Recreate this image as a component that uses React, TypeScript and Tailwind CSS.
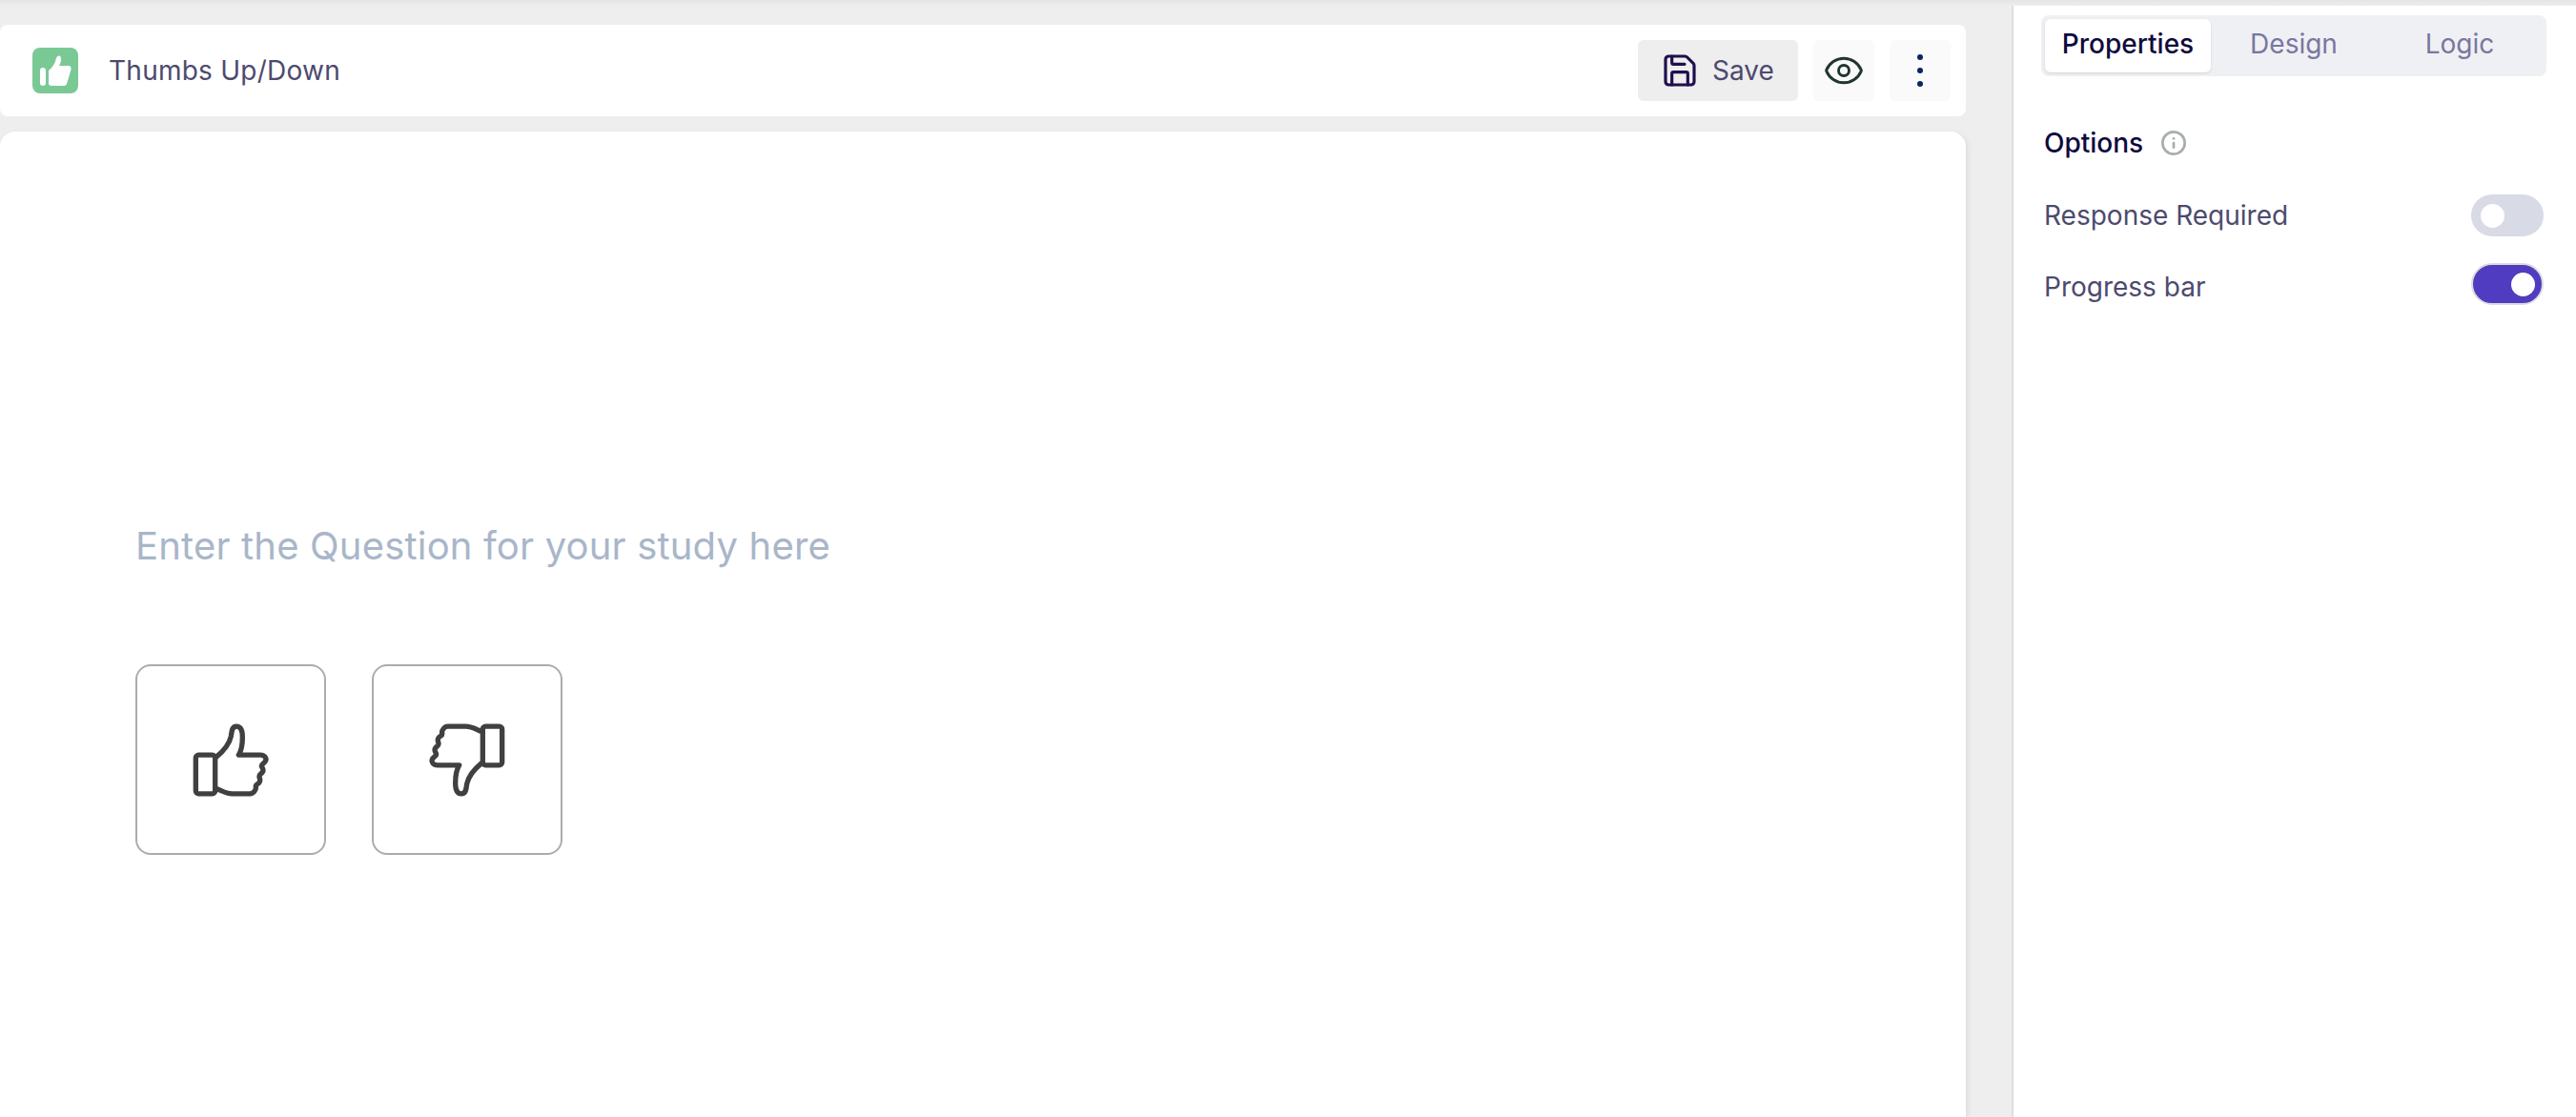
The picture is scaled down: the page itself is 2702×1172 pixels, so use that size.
import React from 'react';
import { Eye, Info, Save } from 'lucide-react';

const Thumb: React.FC<{ className?: string }> = ({ className }) => (
  <svg viewBox="215 235 240 230" className={className} fill="none" stroke="currentColor" strokeWidth="16" strokeLinejoin="round" strokeLinecap="round">
    <rect x="225" y="334" width="61" height="122" rx="9" />
    <path d="M290 340C312 322 330 302 336 275C338 262 338 244 353 244C368 244 372 258 372 278C372 298 370 318 360 334H428C442 334 448 344 445 352C442 360 432 362 432 368C432 374 440 378 436 386C432 394 424 394 425 402C426 410 430 412 425 420C421 427 412 426 414 434C416 444 406 456 396 456H340C320 456 306 446 290 440" />
  </svg>
);

const Toggle: React.FC<{ on?: boolean }> = ({ on }) => (
  <div className={on ? 'w-[76px] h-[44px] -translate-y-[3px] rounded-full bg-[#4f3cc0] border-2 border-[#dcdcdc] flex items-center justify-end pr-[7px]' : 'w-[76px] h-[44px] rounded-full bg-[#d8dae5] flex items-center pl-[10px]'}>
    <div className="w-[25px] h-[25px] rounded-full bg-white" />
  </div>
);

const App: React.FC = () => {
  const options = [
    { label: 'Response Required', on: false },
    { label: 'Progress bar', on: true },
  ];

  return (
    <div className="h-screen overflow-hidden flex flex-col bg-white font-['Inter',sans-serif]">
      <div className="h-[6px] shrink-0 bg-gradient-to-b from-[#e4e4e4] to-[#eeeeee]" />
      <div className="flex flex-1 min-h-0">
        <main className="w-[2112px] shrink-0 bg-[#eeeeee] border-r-2 border-[#dddddd] pt-[20px] pr-[48px] flex flex-col gap-4">
          <header className="h-[96px] shrink-0 bg-white rounded-r-lg rounded-l-lg flex items-center pl-[34px] pr-4">
            <div className="w-12 h-12 rounded-lg bg-[#7ac995] flex items-center justify-center">
              <svg viewBox="0 0 48 48" className="w-12 h-12" fill="#ffffff">
                <rect x="8" y="21" width="6" height="19" rx="3" />
                <path d="M17 24C21 21 24 16 25 11C26 8 30 7 30 12C30 15 29 17 28 19H38C40 19 41 21 40.5 23L36 38C35.500 39.500 34 40 33 40H20C18 40 17 39 17 37Z" />
              </svg>
            </div>
            <h1 className="ml-[32px] text-[28px] leading-none tracking-[0.25px] text-[#4d4a6e]">Thumbs Up/Down</h1>
            <div className="ml-auto flex items-center gap-4">
              <button className="h-16 w-[168px] rounded-md bg-[#eeeeee] flex items-center pl-[24px] gap-[14px] text-[28px] text-[#4d4a6e]">
                <Save className="w-[40px] h-[40px] text-[#1f0f4f]" strokeWidth={1.9} />
                Save
              </button>
              <button className="w-16 h-16 rounded-md bg-[#fafafa] flex items-center justify-center">
                <Eye className="w-[44px] h-[44px] text-[#22352f]" strokeWidth={1.6} />
              </button>
              <button className="w-16 h-16 rounded-md bg-[#fafafa] flex flex-col items-center justify-center gap-[8px]">
                <span className="w-[6px] h-[6px] rounded-full bg-[#0d2463]" />
                <span className="w-[6px] h-[6px] rounded-full bg-[#0d2463]" />
                <span className="w-[6px] h-[6px] rounded-full bg-[#0d2463]" />
              </button>
            </div>
          </header>

          <section className="flex-1 bg-white rounded-t-2xl shadow-[2px_2px_6px_rgba(0,0,0,0.08)] pl-[142px] pt-[410px]">
            <p className="text-[40px] leading-[50px] tracking-[0.18px] text-[#a9b6c9]">Enter the Question for your study here</p>
            <div className="mt-[99px] flex gap-[48px]">
              <div className="w-[200px] h-[200px] rounded-2xl border-2 border-[#a8aeab] flex items-center justify-center">
                <Thumb className="w-[80px] h-[77px] text-[#404040]" />
              </div>
              <div className="w-[200px] h-[200px] rounded-2xl border-2 border-[#a8aeab] flex items-center justify-center">
                <Thumb className="w-[80px] h-[77px] text-[#404040] rotate-180" />
              </div>
            </div>
          </section>
        </main>

        <aside className="flex-1 bg-white pl-[29px] pr-[31px] pt-[10px]">
          <div className="h-[64px] rounded-lg bg-[#eff0f4] p-1 grid grid-cols-3 items-stretch text-[28px] leading-[52px]">
            <div className="rounded-md bg-white shadow-sm flex items-start justify-center font-medium text-[#0e0a3c]">Properties</div>
            <div className="flex items-start justify-center text-[#7a769f]">Design</div>
            <div className="flex items-start justify-center text-[#7a769f]">Logic</div>
          </div>

          <div className="mt-[52px] flex items-center gap-[18px] pl-[3px]">
            <span className="text-[28px] leading-9 font-medium text-[#0e0a3c]">Options</span>
            <Info className="w-[28px] h-[28px] text-[#a7aeab]" strokeWidth={2.3} />
          </div>

          <div className="mt-[36px] flex flex-col gap-[31px] pl-[3px] pr-[3px]">
            {options.map((o) => (
              <div key={o.label} className="flex items-center justify-between h-[44px]">
                <span className="text-[28px] text-[#4d4a6e]">{o.label}</span>
                <Toggle on={o.on} />
              </div>
            ))}
          </div>
        </aside>
      </div>
    </div>
  );
};

export default App;
